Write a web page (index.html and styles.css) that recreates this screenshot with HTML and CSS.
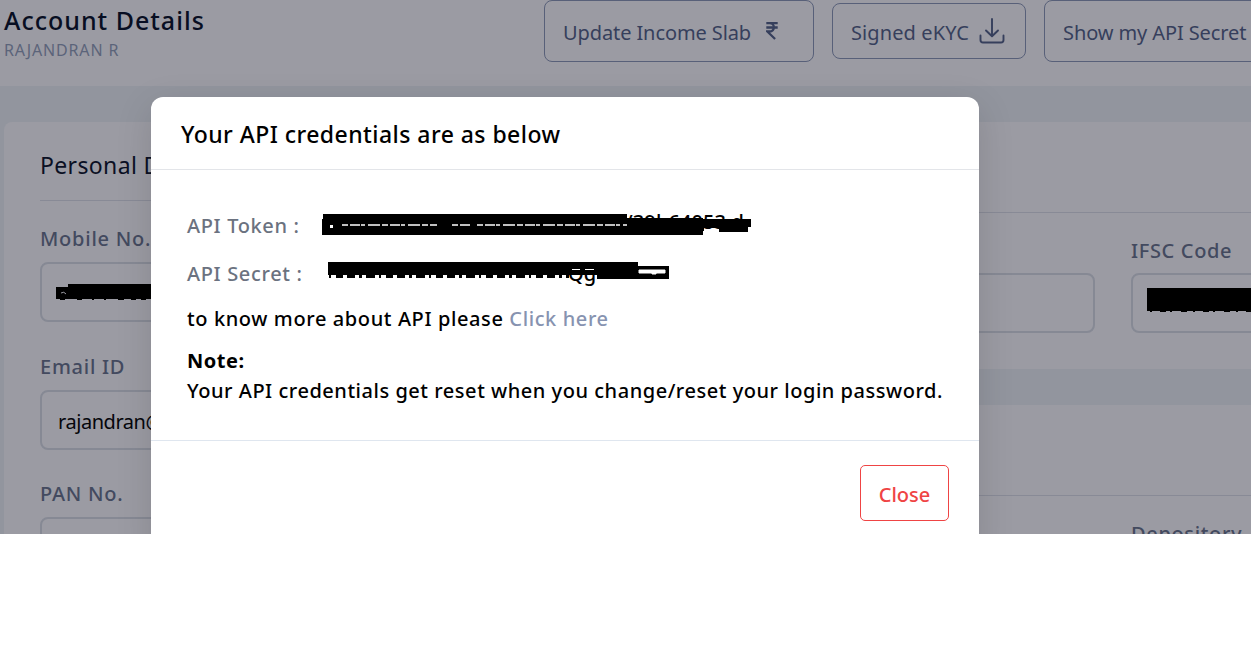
FILE: index.html
```html
<!DOCTYPE html>
<html lang="en">
<head>
<meta charset="utf-8">
<title>Account Details</title>
<link rel="stylesheet" href="styles.css">
</head>
<body>
<div class="page">
  <header class="header">
    <div class="heading">
      <h1 class="title"><span>Account Details</span></h1>
      <div class="holder"><span>RAJANDRAN R</span></div>
    </div>
    <div class="actions">
      <button class="action action-income"><span>Update Income Slab</span>
        <svg class="rupee" viewBox="0 0 12 18"><path d="M.3 1.200h11.400M.3 5.500h11.400M.5 1.200h3.200c5.600 0 5.600 8.300 0 8.300H1.300l7.800 7.500" fill="none" stroke="#363f5c" stroke-width="2.300"/></svg>
      </button>
      <button class="action action-kyc"><span>Signed eKYC</span>
        <svg class="download" viewBox="0 0 26 26"><path d="M13 1v17M7 12.500l6 5.800 6-5.800M1.500 17.500v4.500q0 2.500 2.500 2.500h18q2.500 0 2.500-2.500v-4.500" fill="none" stroke="#363f5c" stroke-width="1.900" stroke-linecap="round" stroke-linejoin="round"/></svg>
      </button>
      <button class="action action-secret"><span>Show my API Secret</span></button>
    </div>
  </header>
  <main class="content">
    <section class="card personal">
      <h2 class="card-title"><span>Personal Details</span></h2>
      <div class="field"><label class="label"><span>Mobile No.</span></label>
        <div class="input"><svg class="mask-mobile" viewBox="0 0 97 18"><path d="M12 1h85v15H0V4h12z"/><path d="M4 16h5v1H4zM21 16h5v1h-5zM36 16h2v1h-2zM48 16h2v1h-2zM62 16h6v1h-6zM75 16h5v1h-5zM85 16h5v1h-5z"/><path d="M5 10q3-2 5 1" fill="none" stroke="#9b9ba3"/></svg></div>
      </div>
      <div class="field"><label class="label"><span>Email ID</span></label>
        <div class="input"><span class="email">rajandran@</span></div>
      </div>
      <div class="field"><label class="label"><span>PAN No.</span></label><div class="input"></div></div>
    </section>
    <div class="column">
      <section class="card bank">
        <div class="rule"></div>
        <div class="row">
          <div class="field"><label class="label"></label><div class="input"></div></div>
          <div class="field"><label class="label"><span>IFSC Code</span></label>
            <div class="input"><svg class="mask-ifsc" viewBox="0 0 120 25"><path d="M0 0h120v23H0z"/><path d="M3 23.500h120" stroke="#000" stroke-dasharray="2 8 6 4 2 9 6 6"/></svg></div>
          </div>
        </div>
      </section>
      <section class="card demat">
        <div class="rule"></div>
        <div class="row">
          <div class="field"></div>
          <div class="field"><label class="label"><span>Depository</span></label></div>
        </div>
      </section>
    </div>
  </main>
  <div class="modal" role="dialog">
    <div class="modal-header"><span>Your API credentials are as below</span></div>
    <div class="modal-body">
      <div class="credential"><span class="key">API Token :</span>
        <div class="value value-token"><span class="tail">/39b64053.d</span>
          <svg class="mask-token" viewBox="0 0 430 22"><path d="M1 0h304v4h76v1h48v8h-3v5h-29v-4h-15v3h-1v4H0V5h1z"/><path d="M8 11h3v3H8z" fill="#fff"/><path d="M20 11h95M130 11h18M155 11h150" stroke="#fff" stroke-width="1.500" stroke-dasharray="6 2 10 1 4 3 12 2"/></svg>
        </div>
      </div>
      <div class="credential"><span class="key">API Secret :</span>
        <div class="value value-secret"><span class="tail">Qg</span>
          <svg class="mask-secret" viewBox="0 0 342 22"><path d="M0 0h310v4h31v13h-72V13H0z"/><path d="M1 14.500h240" stroke="#000" stroke-width="3" stroke-dasharray="2 5 7 4 8 4 3 4 9 4"/><path d="M311 8h26v3h-9v1h-4v-1h-13zM244 7.500h8M257 7.500h9" fill="#fff" stroke="#fff"/></svg>
        </div>
      </div>
      <p class="more"><span>to know more about API please <a class="link">Click here</a></span></p>
      <p class="note-title"><span>Note:</span></p>
      <p class="note"><span>Your API credentials get reset when you change/reset your login password.</span></p>
    </div>
    <div class="modal-footer"><button class="close"><span>Close</span></button></div>
  </div>
</div>
</body>
</html>
```
FILE: styles.css
```css
* { box-sizing: border-box; }
body { margin: 0; background: #fff; font-family: "Noto Sans", "Open Sans", sans-serif; font-size: 20px; line-height: 30px; overflow: hidden; }
h1, h2, p { margin: 0; }
span { white-space: nowrap; }
button { font: inherit; background: none; padding: 0; }
.page { position: relative; width: 1251px; height: 534px; overflow: hidden; background: #92959e; }
.header { display: flex; height: 86px; padding-left: 4px; background: #9b9ba3; }
.heading { width: 540px; flex: none; padding-top: 4px; }
.title { font-size: 25px; line-height: 32px; font-weight: 500; color: #080e22; letter-spacing: 1px; }
.holder { padding-top: 2px; font-size: 16px; line-height: 24px; color: #5b647a; letter-spacing: .85px; }
.actions { display: flex; gap: 18px; height: 62px; align-items: center; }
.action { display: flex; align-items: center; flex: none; height: 62px; padding: 4px 0 0 18px; border: 1px solid #586079; border-radius: 8px; color: #363f5c; letter-spacing: -.1px; }
.action-income { width: 270px; }
.action-kyc { width: 194px; height: 56px; letter-spacing: .1px; }
.action-secret { width: 270px; }
.rupee { width: 12px; height: 18px; margin: -4px 0 0 15px; }
.download { width: 26px; height: 26px; margin: -4px 0 0 10px; }
.content { display: grid; grid-template-columns: 696px 1fr; gap: 36px; padding: 36px 0 0 4px; }
.card { border-radius: 8px; background: #9b9ba3; }
.personal { height: 520px; padding: 0 36px; }
.card-title { height: 79px; padding-top: 27px; border-bottom: 1px solid #888a96; font-size: 23px; line-height: 32px; font-weight: 400; color: #0b1024; letter-spacing: .35px; }
.field { padding-top: 23px; height: 127.500px; min-width: 0; }
.label { display: block; height: 38px; color: #434a5f; font-weight: 500; letter-spacing: .75px; }
.input { height: 60px; border: 2px solid #868994; border-radius: 8px; padding: 0 16px; }
.email { display: block; line-height: 59px; color: #05060b; letter-spacing: -.45px; }
.column { display: grid; grid-template-rows: 247px 200px; gap: 36px; }
.column .card { padding-left: 36px; }
.rule { height: 91px; border-bottom: 1px solid #888a96; }
.row { display: grid; grid-template-columns: 323px 323px; gap: 36px; }
.row .field { padding-top: 23px; }
.row .label { height: 37px; letter-spacing: .65px; }
.mask-mobile { display: block; width: 97px; height: 18px; margin: 19px 0 0 -2px; }
.mask-ifsc { display: block; width: 120px; height: 25px; margin: 13px 0 0 -2px; }
.modal { position: absolute; left: 151px; top: 97px; width: 828px; height: 460px; border-radius: 12px; background: #fff; box-shadow: 0 10px 36px rgba(0,0,0,.13); color: #000; font-weight: 500; letter-spacing: .53px; }
.modal-header { height: 73px; padding: 21px 30px; border-bottom: 1px solid #e3e5e9; font-size: 23px; line-height: 32px; letter-spacing: .45px; }
.modal-body { height: 271px; padding: 41px 36px 0; border-bottom: 1px solid #dfe6ef; }
.credential { display: flex; height: 48px; }
.key { width: 135px; color: #6b7280; letter-spacing: .65px; }
.value { position: relative; width: 430px; height: 30px; letter-spacing: .1px; }
.mask-token { position: absolute; left: 0; top: 3px; width: 430px; height: 22px; }
.mask-secret { position: absolute; left: 6px; top: 3px; width: 342px; height: 22px; }
.tail { position: absolute; top: -4px; left: 303px; }
.value-secret .tail { left: 246px; top: 0; }
.more { margin-top: -3px; height: 42px; letter-spacing: .61px; }
.link { color: #8793b0; }
.note-title { font-weight: 700; }
.modal-footer { display: flex; justify-content: flex-end; padding: 24px 30px; }
.close { width: 89px; height: 56px; padding-top: 3px; border: 1px solid #ef4444; border-radius: 5px; color: #ef4444; font-weight: 500; }
```
